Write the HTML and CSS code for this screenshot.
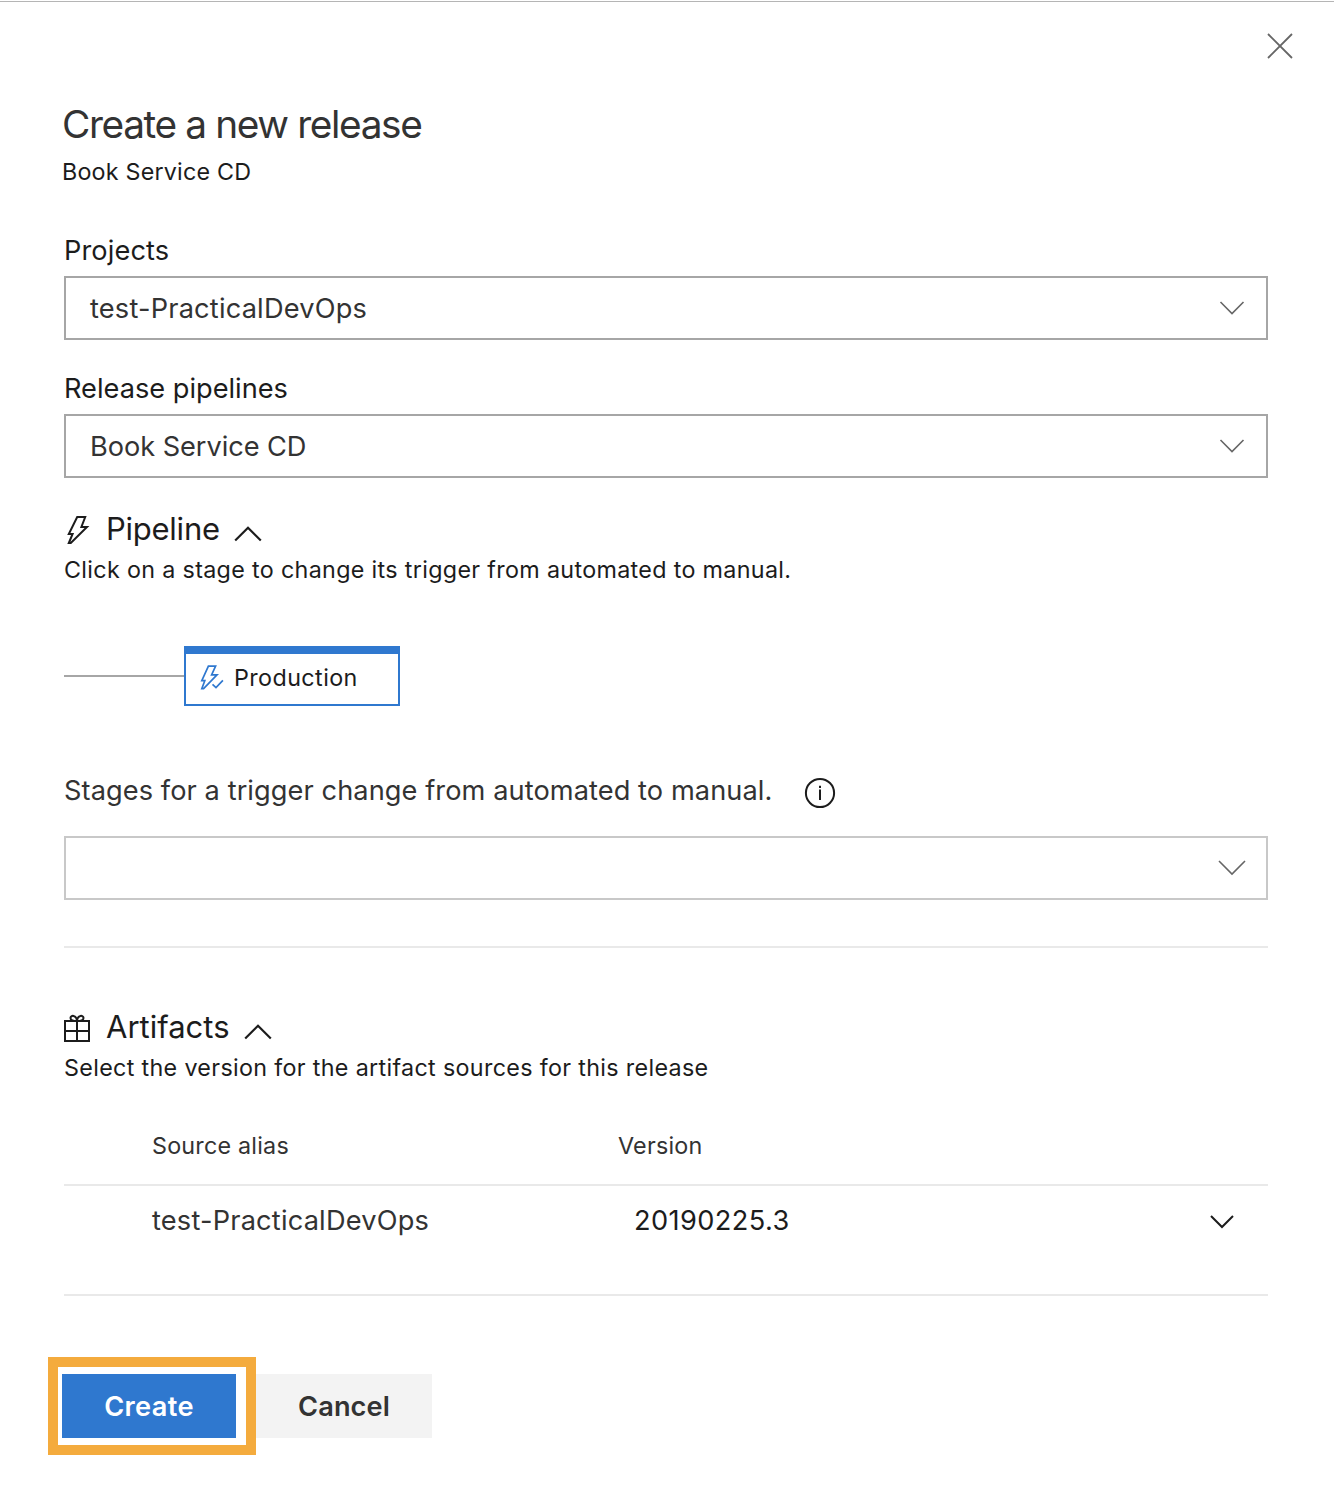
FILE: index.html
```html
<!DOCTYPE html>
<html lang="en">
<head>
<meta charset="utf-8">
<title>Create a new release</title>
<link rel="stylesheet" href="styles.css">
</head>
<body>
<main class="panel">
  <header class="panel-header">
    <div class="heading">
      <h1 class="title">Create a new release</h1>
      <p class="subtitle">Book Service CD</p>
    </div>
    <button class="close" aria-label="Close"><svg width="26" height="26" viewBox="0 0 26 26"><path d="M1 1L25 25M25 1L1 25"/></svg></button>
  </header>

  <label class="label label-projects">Projects</label>
  <div class="select"><span class="project-name">test-PracticalDevOps</span><svg class="chevron" width="26" height="16" viewBox="0 0 26 16"><path d="M1.5 2L13 13.5L24.5 2"/></svg></div>

  <label class="label label-pipelines">Release pipelines</label>
  <div class="select"><span class="pipeline-name">Book Service CD</span><svg class="chevron" width="26" height="16" viewBox="0 0 26 16"><path d="M1.5 2L13 13.5L24.5 2"/></svg></div>

  <section class="pipeline">
    <h2 class="section-title"><svg class="section-icon" width="28" height="32" viewBox="0 0 28 32"><path d="M13.2 3H21.2L17.4 12.9H23L6.8 29H4.8L8.6 20H4.8Z"/></svg><span class="pipeline-title">Pipeline</span><svg class="caret" width="28" height="16" viewBox="0 0 28 16"><path d="M1.2 14.5L14 1.7L26.8 14.5"/></svg></h2>
    <p class="note">Click on a stage to change its trigger from automated to manual.</p>
    <div class="flow">
      <div class="connector"></div>
      <div class="stage"><svg class="stage-icon" width="26" height="28" viewBox="0 0 26 28"><path d="M9.4 4.1H16.6L12.6 12.9H18L4.6 26.6H2.8L5.8 18.7H2.8ZM13.5 22.3L17 25.6L23.9 18.4"/></svg><span>Production</span></div>
    </div>
  </section>

  <div class="trigger-label"><span>Stages for a trigger change from automated to manual.</span><svg width="32" height="32" viewBox="0 0 32 32"><circle cx="16" cy="16" r="14.1"/><path d="M16 12.5V23M16 8.8V11"/></svg></div>
  <div class="select select-light"><svg class="chevron" width="30" height="18" viewBox="0 0 30 18"><path d="M2 2L15 15L28 2"/></svg></div>
  <hr class="divider">

  <section class="artifacts">
    <h2 class="section-title"><svg class="section-icon" width="28" height="32" viewBox="0 0 28 32"><path d="M1 9H25V29H1ZM13 9V29M1 19H25M13 9C10 9 6.5 8.5 6.5 6C6.5 3 12.5 2.5 13 9C13.5 2.5 19.5 3 19.5 6C19.5 8.5 16 9 13 9"/></svg><span>Artifacts</span><svg class="caret" width="28" height="16" viewBox="0 0 28 16"><path d="M1.2 14.5L14 1.7L26.8 14.5"/></svg></h2>
    <p class="note">Select the version for the artifact sources for this release</p>
    <div class="row row-head"><span class="col-alias">Source alias</span><span>Version</span></div>
    <div class="row row-item"><span class="col-alias">test-PracticalDevOps</span><span class="col-value">20190225.3</span><svg class="row-chevron" width="26" height="16" viewBox="0 0 26 16"><path d="M2 2L13 13L24 2"/></svg></div>
  </section>

  <footer class="actions">
    <button class="btn btn-create">Create</button>
    <button class="btn btn-cancel">Cancel</button>
    <div class="highlight"></div>
  </footer>
</main>
</body>
</html>
```
FILE: styles.css
```css
* { box-sizing: border-box; }

body {
  margin: 0;
  background: #fff;
  color: #1c1c1c;
  font-family: Inter, "Liberation Sans", sans-serif;
}

h1, h2, p { margin: 0; font-weight: 400; }

svg { display: block; flex: none; fill: none; stroke: currentColor; stroke-width: 2; }

button { border: 0; padding: 0; background: none; font-family: inherit; }

.panel {
  height: 1502px;
  padding: 1px 66px 0 64px;
  background: linear-gradient(#b5b5b5, #b5b5b5) 0 1px / 100% 1px no-repeat #fff;
}

.panel-header {
  display: flex;
  justify-content: space-between;
  align-items: flex-start;
  height: 234px;
  margin: 0 -25px 0 -2px;
  padding-top: 32px;
}

.heading { padding-top: 67px; }
.title { font-size: 38.8px; line-height: 48px; letter-spacing: -1.38px; color: #333; }
.subtitle { font-size: 23.3px; line-height: 47px; letter-spacing: 0.2px; }
.close { color: #666; }
.close svg { stroke-width: 1.8; }

.label { display: block; font-size: 27.2px; line-height: 32px; margin-bottom: 9px; }
.label-projects { letter-spacing: 0.1px; }
.label-pipelines { margin-top: 33px; }

.select {
  display: flex;
  align-items: center;
  height: 64px;
  padding: 0 21px 0 24px;
  border: 2px solid #a6a6a6;
  font-size: 27.2px;
  color: #333;
}
.select-light { padding-right: 19px; border-color: #c8c8c8; }
.chevron { margin-left: auto; color: #666; stroke-width: 1.6; }
.project-name { letter-spacing: 0.19px; }
.pipeline-name { letter-spacing: -0.06px; }

.pipeline { padding-top: 30px; height: 297px; }
.section-title {
  display: flex;
  align-items: center;
  height: 40px;
  font-size: 31px;
}
.pipeline-title { letter-spacing: -0.25px; }
.section-icon { margin: 4px 14px 0 0; }
.caret { margin: 12px 0 0 14.5px; stroke-width: 2.2; }
.note { margin-top: 1px; font-size: 23.3px; line-height: 41px; letter-spacing: 0.33px; white-space: nowrap; }

.flow { display: flex; align-items: center; margin-top: 56px; }
.connector { width: 120px; height: 2px; background: #a6a6a6; }
.stage {
  display: flex;
  align-items: center;
  width: 216px;
  height: 60px;
  padding: 0 0 3px 13px;
  border: 2px solid #2f78cf;
  border-top-width: 8px;
  font-size: 23.3px;
  letter-spacing: 0.42px;
}
.stage-icon { margin: -3px 9px 0 0; color: #2f78cf; stroke-width: 1.7; }

.trigger-label {
  display: flex;
  height: 32px;
  margin-bottom: 29px;
  font-size: 27.2px;
  line-height: 32px;
  letter-spacing: 0.08px;
  color: #333;
}
.trigger-label svg { margin: 2px 0 0 31.5px; color: #1c1c1c; }

.divider { height: 2px; margin: 46px 0 0; border: 0; background: #e9e9e9; }

.artifacts { padding-top: 58px; }
.row { display: flex; border-bottom: 2px solid #e9e9e9; padding-left: 88px; }
.row-head { height: 98px; padding-top: 42px; font-size: 23.3px; line-height: 32px; letter-spacing: 0.22px; color: #333; }
.row-item { height: 110px; padding-top: 19px; font-size: 27.2px; line-height: 32px; letter-spacing: 0.19px; color: #333; }
.col-alias { width: 466px; }
.col-value { padding-left: 16px; letter-spacing: 0.4px; color: #1c1c1c; }
.row-chevron { margin: 9px 33px 0 auto; color: #1c1c1c; }

.actions { position: relative; display: flex; gap: 20px; margin: 78px 0 0 -2px; }
.btn { height: 64px; font-size: 27.2px; font-weight: 600; }
.btn-create { width: 174px; background: #2f78cf; color: #fff; letter-spacing: 0.35px; }
.btn-cancel { width: 176px; background: #f3f3f3; color: #333; letter-spacing: 0.1px; }
.highlight {
  position: absolute;
  left: -14px;
  top: -17px;
  width: 208px;
  height: 98px;
  border: 10px solid #f4ab3d;
}
```
